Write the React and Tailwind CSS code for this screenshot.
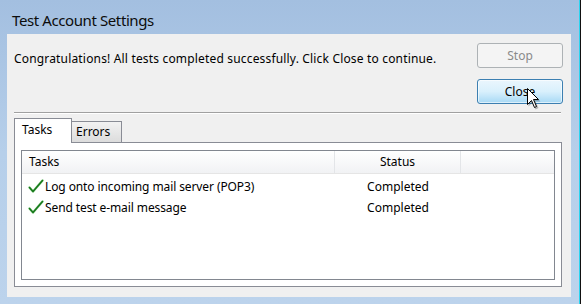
import React from "react";

const font = { fontFamily: '"Noto Sans", "Open Sans", Arial, sans-serif' };

function Check() {
  return (
    <svg width="16" height="15" viewBox="0 0 16 15" className="shrink-0">
      <path d="M1.5 8.5 L5 12.5 L14.5 1.5" fill="none" stroke="#8fcf8f" strokeWidth="2.4" strokeLinecap="round" strokeLinejoin="round" />
      <path d="M1.5 8.5 L5 12.5 L14.5 1.5" fill="none" stroke="#16771a" strokeWidth="1.5" strokeLinecap="round" strokeLinejoin="round" />
    </svg>
  );
}

function Cursor() {
  return (
    <svg width="16" height="24" viewBox="0 0 16 24" className="absolute left-[526px] top-[87px]">
      <path d="M2.5 2.5 L2.5 19.5 L6.5 15.5 L9.5 22.5 L12.5 21 L9.5 14.5 L14.5 14.5 Z" fill="rgba(0,0,0,0.25)" />
      <path d="M1.5 1.5 L1.5 17.5 L5.5 13.5 L8.5 20.5 L10.5 19.5 L7.5 12.5 L12.5 12.5 Z" fill="#fff" stroke="#000" strokeWidth="1" strokeLinejoin="miter" />
    </svg>
  );
}

const rows = [
  { task: "Log onto incoming mail server (POP3)", status: "Completed" },
  { task: "Send test e-mail message", status: "Completed" },
];

export default function App() {
  return (
    <div
      className="relative w-[581px] h-[304px] overflow-hidden flex bg-gradient-to-b from-[#a3bfe0] via-[#b6cfea] to-[#bcd3ec] text-black"
      style={font}
    >
      <div className="flex-1 flex flex-col">
        {/* Title */}
        <div className="h-[34px] pl-3 pt-[10px] text-[15px] leading-[20px] tracking-[-0.4px] text-[#0c0c0c]">Test Account Settings</div>

        {/* Client area */}
        <div className="ml-[7px] w-[564px] h-[263px] bg-[#f0f0f0] pl-[7px] pr-[8px] text-[12px]">
          <div className="flex justify-between pt-[9px]">
            <p className="mt-[8px] leading-[16px] tracking-[0.17px]">
              Congratulations! All tests completed successfully. Click Close to continue.
            </p>
            <div className="flex flex-col gap-[11px]">
              <button className="w-[86px] h-[25px] rounded-[3px] border border-[#adb2b5] bg-[#f4f4f4] text-[#8a8a8a] leading-none">
                Stop
              </button>
              <button className="w-[86px] h-[25px] rounded-[3px] border border-[#3c7fb1] bg-gradient-to-b from-[#eaf6fd] via-[#d9f0fc] to-[#a7d9f5] leading-none shadow-[inset_0_0_0_1px_rgba(255,255,255,0.6)]">
                Close
              </button>
            </div>
          </div>

          <div className="mt-[8px] border-t border-b border-t-[#a0a0a0] border-b-white mr-[2px]" />

          {/* Tabs */}
          <div className="mt-[4px] flex items-end -mb-px relative z-10">
            <div className="w-[58px] h-[25px] bg-white border border-b-0 border-[#898c95] pl-[7px] pt-[3px] leading-[16px]">
              Tasks
            </div>
            <div className="-ml-px mb-px w-[51px] h-[21px] border border-b-0 border-[#898c95] bg-gradient-to-b from-[#f2f2f2] to-[#dcdcdc] pl-[4px] pt-[2px] leading-[16px]">
              Errors
            </div>
          </div>

          {/* Panel */}
          <div className="h-[145px] mr-[1px] border border-[#898c95] bg-white px-[6px] pt-[7px] pb-[6px]">
            <div className="h-full border border-[#828790] bg-white">
              <div className="flex h-[23px] bg-gradient-to-b from-white to-[#f1f2f4] border-b border-[#e5e5e5] leading-[22px]">
                <div className="w-[313px] pl-[7px] border-r border-[#e3e5e8]">Tasks</div>
                <div className="w-[126px] text-center border-r border-[#e3e5e8]">Status</div>
                <div className="flex-1" />
              </div>
              <div className="pt-[2px]">
                {rows.map((r) => (
                  <div key={r.task} className="flex h-[21px] items-center">
                    <div className="w-[313px] flex items-center pl-[6px] gap-[1px]">
                      <Check />
                      <span className="leading-[16px] tracking-[-0.1px]">{r.task}</span>
                    </div>
                    <div className="w-[126px] text-center leading-[16px]">{r.status}</div>
                  </div>
                ))}
              </div>
            </div>
          </div>
        </div>
      </div>

      <div className="w-[1px] bg-[#2ad4f0]" />
      <div className="w-[1px] bg-[#111]" />

      <Cursor />
    </div>
  );
}
